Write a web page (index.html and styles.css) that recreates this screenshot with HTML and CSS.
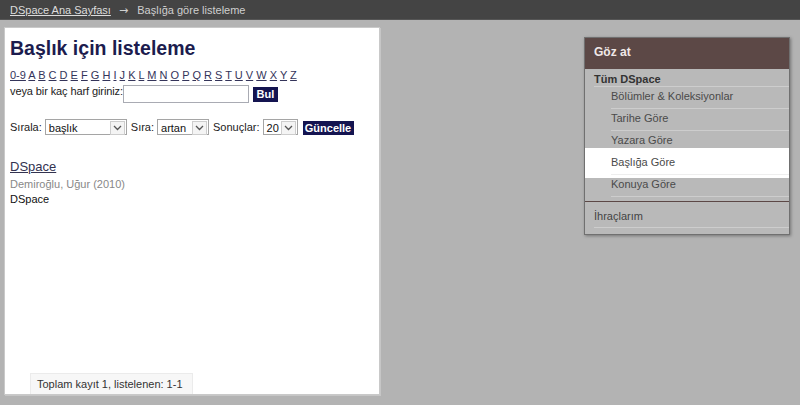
FILE: index.html
```html
<!DOCTYPE html>
<html lang="tr">
  <head>
    <meta charset="utf-8" />
    <title>Başlık için listeleme</title>
    <link rel="stylesheet" href="styles.css">
  </head>
  <body>
    <div class="topbar">
      <a href="#">DSpace Ana Sayfası</a>
      <span class="arrow">→</span>
      <span class="current">Başlığa göre listeleme</span>
    </div>

    <div class="main">
      <div class="content">
        <h1>Başlık için listeleme</h1>

        <div class="letters">
          <a href="#">0-9</a> <a href="#">A</a> <a href="#">B</a> <a href="#">C</a> <a href="#">D</a> <a href="#">E</a> <a href="#">F</a> <a href="#">G</a> <a href="#">H</a> <a href="#">I</a> <a href="#">J</a> <a href="#">K</a> <a href="#">L</a> <a href="#">M</a> <a href="#">N</a> <a href="#">O</a> <a href="#">P</a> <a href="#">Q</a> <a href="#">R</a> <a href="#">S</a> <a href="#">T</a> <a href="#">U</a> <a href="#">V</a> <a href="#">W</a> <a href="#">X</a> <a href="#">Y</a> <a href="#">Z</a>
        </div>

        <div class="jump-row">
          <span class="label">veya bir kaç harf giriniz:</span>
          <input type="text" class="jump-input">
          <button class="btn btn-bul">Bul</button>
        </div>

        <div class="sort-row">
          <span class="label">Sırala:</span>
          <span class="select select-sort">başlık<span class="drop"><svg width="9" height="6" viewBox="0 0 9 6"><path d="M1 1 L4.5 4.5 L8 1" fill="none" stroke="#555" stroke-width="1.3"/></svg></span></span>
          <span class="label">Sıra:</span>
          <span class="select select-order">artan<span class="drop"><svg width="9" height="6" viewBox="0 0 9 6"><path d="M1 1 L4.5 4.5 L8 1" fill="none" stroke="#555" stroke-width="1.3"/></svg></span></span>
          <span class="label">Sonuçlar:</span>
          <span class="select select-rpp">20<span class="drop"><svg width="9" height="6" viewBox="0 0 9 6"><path d="M1 1 L4.5 4.5 L8 1" fill="none" stroke="#555" stroke-width="1.3"/></svg></span></span>
          <button class="btn btn-update">Güncelle</button>
        </div>

        <div class="results">
          <a href="#" class="item-title">DSpace</a>
          <div class="item-author">Demiroğlu, Uğur (2010)</div>
          <div class="item-publisher">DSpace</div>
        </div>

        <div class="pagination">Toplam kayıt 1, listelenen: 1-1</div>
      </div>

      <div class="sidebar">
        <div class="sidebar-head">Göz at</div>
        <div class="sidebar-body">
          <div class="sidebar-title">Tüm DSpace</div>
          <ul class="browse-list">
            <li><a href="#">Bölümler &amp; Koleksiyonlar</a></li>
            <li><a href="#">Tarihe Göre</a></li>
            <li><a href="#">Yazara Göre</a></li>
            <li class="active"><a href="#">Başlığa Göre</a></li>
            <li><a href="#">Konuya Göre</a></li>
          </ul>
        </div>
        <div class="sidebar-section">
          <div class="section-title">İhraçlarım</div>
        </div>
      </div>
    </div>
  </body>
</html>
```

FILE: styles.css
```css
body, html {
  margin: 0;
  padding: 0;
}
body {
  background: #b3b3b3;
  font-family: "Liberation Sans", Arial, sans-serif;
  font-size: 11px;
  line-height: 15px;
  color: #222;
  height: 405px;
  overflow: hidden;
}

/* breadcrumb bar */
.topbar {
  height: 20px;
  line-height: 20px;
  background: #444;
  border-bottom: 1px solid #555;
  box-sizing: border-box;
  padding-left: 10px;
  color: #cfcfcf;
}
.topbar a {
  color: #dcdcdc;
}
.topbar .arrow {
  font-family: "DejaVu Sans", sans-serif;
  font-size: 11px;
  margin: 0 6px 0 5px;
}

.main {
  display: flex;
  justify-content: space-between;
  align-items: flex-start;
  padding: 7px 10px 0 4px;
}

/* left content panel */
.content {
  width: 376px;
  height: 368px;
  box-sizing: border-box;
  background: #fff;
  border: 1px solid #c9c9c9;
  box-shadow: 1px 1px 0 #c6c6c6;
  padding: 8px 5px 0 5px;
  display: flex;
  flex-direction: column;
}
.content h1 {
  margin: 0 0 8px;
  font-size: 19.5px;
  line-height: 24px;
  color: #1c1c4e;
}
.letters a {
  color: #34345a;
}

.jump-row {
  display: flex;
  align-items: flex-start;
  margin-top: 1px;
}
.jump-row .label {
  letter-spacing: -0.1px;
}
.jump-input {
  margin: 1px 0 0 0;
  width: 126px;
  height: 18px;
  box-sizing: border-box;
  border: 1px solid #a9abb3;
  padding: 0 2px;
}
.btn {
  background: #141450;
  color: #fff;
  font-family: "Liberation Sans", Arial, sans-serif;
  font-weight: bold;
  font-size: 11px;
  line-height: 13px;
  border: none;
  padding: 0;
  border-radius: 0;
}
.btn-bul {
  width: 25px;
  height: 15px;
  margin: 3px 0 0 4px;
}

.sort-row {
  display: flex;
  align-items: flex-start;
  gap: 3px;
  margin-top: 16px;
}
.sort-row .label {
  margin-top: 1px;
}
.select {
  position: relative;
  display: block;
  height: 16px;
  box-sizing: border-box;
  border: 1px solid #a5a5a5;
  padding-left: 3px;
  line-height: 16px;
  color: #111;
  margin-right: 1px;
}
.select .drop {
  position: absolute;
  right: 1px;
  top: 1px;
  width: 13px;
  height: 12px;
  border: 1px solid #cdcdcd;
  background: #f4f4f4;
  display: flex;
  align-items: center;
  justify-content: center;
}
.select-sort { width: 82px; }
.select-order { width: 52px; }
.select-rpp { width: 35px; margin-right: 2px; }
.btn-update {
  width: 51px;
  height: 14px;
  margin-top: 2px;
}

.results {
  margin-top: 23px;
}
.item-title {
  display: block;
  font-size: 13px;
  line-height: 18px;
  color: #333350;
}
.item-author {
  color: #888;
  margin-top: 1px;
}
.item-publisher {
  color: #111;
}

.pagination {
  margin-top: auto;
  align-self: flex-start;
  margin-left: 20px;
  padding: 3px 9px 2px 6px;
  background: #f7f7f7;
  border: 1px solid #ebebeb;
  border-bottom: none;
  color: #333;
}

/* right browse box */
.sidebar {
  width: 204px;
  margin-top: 10px;
  border: 1px solid #707070;
  background: #b9b9b9;
  box-shadow: 1px 1px 3px rgba(0, 0, 0, 0.35);
}
.sidebar-head {
  background: #5c4846;
  color: #f0e8e8;
  font-weight: bold;
  font-size: 12px;
  line-height: 15px;
  padding: 7px 0 9px 9px;
}
.sidebar-body {
  padding: 4px 0 4px;
  border-bottom: 1px solid #5c4846;
}
.sidebar-title {
  margin-left: 9px;
  font-weight: bold;
  line-height: 13px;
  color: #333;
  border-bottom: 1px solid #cdcdcd;
}
.browse-list {
  list-style: none;
  margin: 0;
  padding: 0;
}
.browse-list li a {
  display: block;
  margin-left: 26px;
  padding: 2px 0 4px;
  border-bottom: 1px solid #cdcdcd;
  color: #4a4a4a;
  text-decoration: none;
}
.browse-list li.active {
  background: #fff;
  box-shadow: 0 -5px 0 #fff, 0 3px 0 #fff;
}
.browse-list li.active a {
  border-bottom-color: #eee;
}
.sidebar-section {
  padding: 7px 0 6px;
}
.section-title {
  margin-left: 9px;
  padding-bottom: 3px;
  border-bottom: 1px solid #cdcdcd;
  color: #444;
}
```
